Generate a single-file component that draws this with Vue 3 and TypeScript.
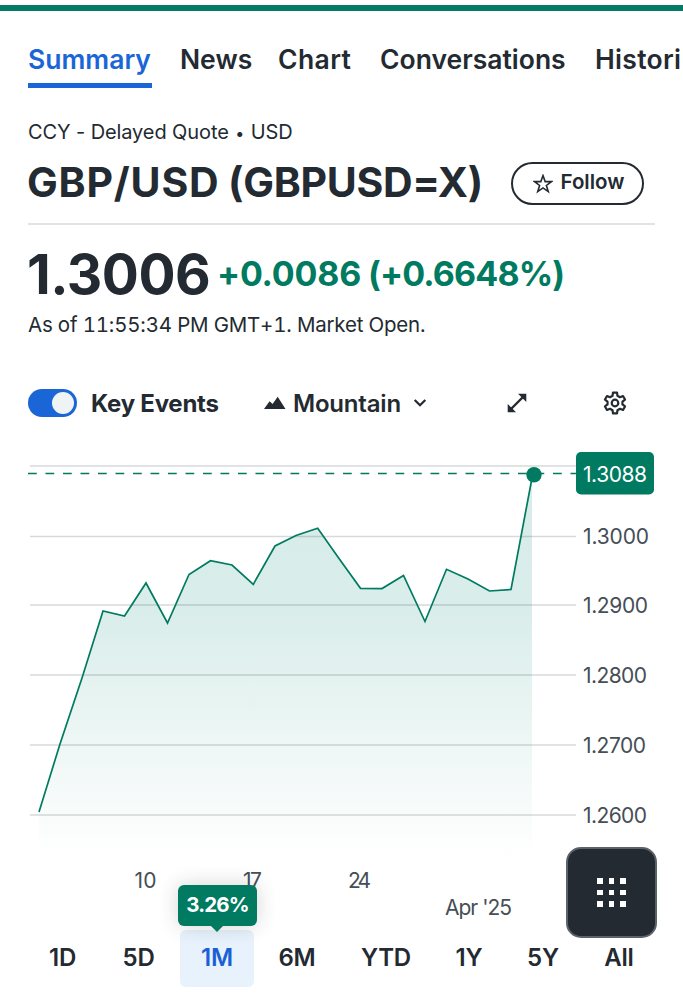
<script setup lang="ts">
interface Tab { label: string; width: number }
interface Point { x: number; y: number }

const tabs: Tab[] = [
  { label: 'Summary', width: 124 },
  { label: 'News', width: 71 },
  { label: 'Chart', width: 73 },
  { label: 'Conversations', width: 187 },
  { label: 'Histori', width: 88 },
]

const ranges = ['1D', '5D', '1M', '6M', 'YTD', '1Y', '5Y', 'All']

const gridLines = [466, 536.5, 605, 675, 745, 815]
const priceLabels = [
  { y: 536.5, text: '1.3000', width: 66 },
  { y: 605, text: '1.2900', width: 65 },
  { y: 675, text: '1.2800', width: 64 },
  { y: 745, text: '1.2700', width: 63 },
  { y: 815, text: '1.2600', width: 64 },
]

const points: Point[] = [
  { x: 39, y: 812 }, { x: 60, y: 744 }, { x: 82, y: 678 }, { x: 103, y: 611 },
  { x: 124.5, y: 616 }, { x: 146, y: 583 }, { x: 167.5, y: 623 }, { x: 189, y: 574.5 },
  { x: 210.5, y: 560.7 }, { x: 232, y: 565 }, { x: 253.3, y: 584.3 }, { x: 275, y: 546 },
  { x: 296, y: 535.5 }, { x: 317.7, y: 528.3 }, { x: 339, y: 558.5 }, { x: 360.5, y: 588.3 },
  { x: 382, y: 588.6 }, { x: 403.5, y: 575.5 }, { x: 425, y: 621.5 }, { x: 446.5, y: 569.3 },
  { x: 468, y: 579 }, { x: 489.5, y: 591 }, { x: 511, y: 589.5 }, { x: 532, y: 478 },
]
const linePath = 'M' + points.map((p) => `${p.x} ${p.y}`).join('L')
const areaPath = `${linePath}V858H39Z`

// Six-toothed cog, one tooth pointing straight up
const polar = (radius: number, deg: number) => {
  const a = ((deg - 90) * Math.PI) / 180
  return `${(12 + radius * Math.cos(a)).toFixed(2)} ${(12 + radius * Math.sin(a)).toFixed(2)}`
}
const gearPath =
  'M' +
  [0, 60, 120, 180, 240, 300]
    .flatMap((d) => [polar(7.6, d - 19), polar(10.6, d - 11), polar(10.6, d + 11), polar(7.6, d + 19)])
    .join('L') +
  'Z'
</script>

<template>
  <main class="page">
    <nav class="tabs">
      <a v-for="(t, i) in tabs" :key="t.label" class="tab" :class="{ active: i === 0 }" :style="{ width: t.width + 'px' }">{{ t.label }}</a>
    </nav>

    <header class="quote">
      <p class="exchange">CCY - Delayed Quote <span class="dot">•</span> USD</p>
      <div class="title-row">
        <h1><span class="pair">GBP/USD</span> <span class="symbol">(GBPUSD=X)</span></h1>
        <button class="follow">
          <svg width="20" height="20" viewBox="0 0 20 20"><path d="M10 1.600l2.150 6h6.250l-5 3.850 1.850 6.150-5.250-3.700-5.250 3.700 1.850-6.150-5-3.850h6.250z" /></svg>
          <span>Follow</span>
        </button>
      </div>
    </header>

    <section class="price">
      <div class="price-row"><span class="last">1.3006</span><span class="change">+0.0086</span><span class="pct">(+0.6648%)</span></div>
      <p class="asof">As of 11:55:34 PM GMT+1. Market Open.</p>
    </section>

    <div class="toolbar">
      <span class="switch"><i></i></span>
      <b class="events">Key Events</b>
      <svg class="mountain" width="22" height="14" viewBox="0 0 22 14"><path d="M0 13L5.6 5.2l3 2.9L13.7.8 21.5 13z" /></svg>
      <span class="kind">Mountain</span>
      <svg class="chevron" width="14" height="10" viewBox="0 0 14 10"><path d="M1.7 2l5.3 5.3L12.3 2" /></svg>
      <svg class="expand" width="20" height="20" viewBox="0 0 20 20"><path class="shaft" d="M3.5 16.5l13-13" /><path d="M11 .7h8.300v8.300zM.7 11v8.300h8.300z" /></svg>
      <svg class="gear" width="24" height="24" viewBox="0 0 24 24"><path :d="gearPath" /><circle cx="12" cy="12" r="3.300" /></svg>
    </div>

    <svg class="chart" width="683" height="500" viewBox="0 430 683 500">
      <defs>
        <linearGradient id="fade" gradientUnits="userSpaceOnUse" x1="0" y1="474" x2="0" y2="858">
          <stop offset="0" stop-color="#008773" stop-opacity="0.155" />
          <stop offset="0.35" stop-color="#008773" stop-opacity="0.15" />
          <stop offset="1" stop-color="#008773" stop-opacity="0" />
        </linearGradient>
      </defs>
      <path :d="areaPath" fill="url(#fade)" />
      <path v-for="y in gridLines" :key="y" class="grid" :d="`M30 ${y}H576`" />
      <path class="last-line" d="M28 473.400H576" />
      <path class="series" :d="linePath" />
      <circle cx="534" cy="474.700" r="7.700" fill="#007a60" />
      <rect x="576" y="452" width="78" height="42.500" rx="5" fill="#007a60" />
      <text class="axis badge" x="583" y="481.500" textLength="64">1.3088</text>
      <text v-for="l in priceLabels" :key="l.text" class="axis" x="583" :y="l.y + 7.700" :textLength="l.width">{{ l.text }}</text>
      <text class="axis" x="134.500" y="888" textLength="22">10</text>
      <text class="axis" x="243" y="888" textLength="19">17</text>
      <text class="axis" x="348" y="888" textLength="23">24</text>
      <text class="axis" x="445" y="914.500" textLength="67">Apr '25</text>
    </svg>

    <div class="ranges">
      <button v-for="r in ranges" :key="r" class="range" :class="{ selected: r === '1M' }">
        {{ r }}
        <span v-if="r === '1M'" class="tip">3.26%</span>
      </button>
    </div>

    <button class="apps" aria-label="Apps"><i v-for="n in 9" :key="n"></i></button>
  </main>
</template>

<style>
body { margin: 0; background: #fff; }
</style>

<style scoped>
.page {
  position: relative;
  width: 683px;
  height: 1000px;
  overflow: hidden;
  box-sizing: border-box;
  border-top: 5px solid #fff;
  font-family: Inter, "Liberation Sans", sans-serif;
  color: #232a31;
  background: #fff;
}
.page::before { content: ""; display: block; height: 6px; background: #037b66; }
button { font: inherit; color: inherit; border: 0; padding: 0; background: none; }
p, h1 { margin: 0; }
.tabs { display: flex; gap: 28px; padding: 31px 0 0 28px; height: 46px; }
.tab { flex: none; height: 41px; line-height: 34px; font-size: 26.500px; font-weight: 570; letter-spacing: 0; white-space: nowrap; border-bottom: 5px solid transparent; }
.tab:nth-child(3) { margin-left: -1px; margin-right: 1px; letter-spacing: .4px; }
.tab:last-child { letter-spacing: .3px; }
.active { color: #1a66d6; border-color: #1a66d6; }
.quote { margin: 0 28px; height: 137px; box-sizing: border-box; border-bottom: 2px solid #e0e4e9; padding-top: 30px; }
.exchange { font-size: 20px; line-height: 28px; letter-spacing: -.1px; white-space: nowrap; }
.dot { font-size: 16px; margin: 0 1px; }
.title-row { display: flex; align-items: center; gap: 29px; height: 50px; margin-top: 10px; }
h1 { display: flex; gap: 11px; width: 454px; font-size: 41px; line-height: 50px; font-weight: 700; white-space: nowrap; }
.pair { width: 190px; letter-spacing: .8px; text-indent: -1px; }
.symbol { letter-spacing: -.3px; text-indent: -1px; }
.follow { display: flex; align-items: center; justify-content: center; gap: 8px; box-sizing: border-box; width: 133px; height: 43px; margin-top: 3px; padding-left: 2px; border: 2px solid #232a31; border-radius: 22px; font-size: 20.500px; line-height: 24px; font-weight: 570; }
.follow span { margin-top: -3px; }
.follow svg { fill: none; stroke: #232a31; stroke-width: 1.600; }
.price { padding-left: 28px; height: 158px; box-sizing: border-box; padding-top: 15px; }
.price-row { display: flex; align-items: center; height: 68px; font-weight: 700; white-space: nowrap; }
.last { width: 190px; font-size: 55px; letter-spacing: -.5px; text-indent: -1px; }
.change { width: 150px; margin-top: -2px; font-size: 34px; letter-spacing: -.2px; color: #007a60; text-indent: -1px; }
.pct { margin-top: -2px; font-size: 34px; letter-spacing: -.85px; color: #007a60; }
.asof { font-size: 20.500px; line-height: 28px; margin-top: 3px; letter-spacing: -.2px; font-variant-numeric: tabular-nums; white-space: nowrap; }
.toolbar { display: flex; align-items: center; height: 40px; padding-left: 28px; font-size: 24px; white-space: nowrap; }
.toolbar svg { flex: none; fill: #232a31; }
.switch { flex: none; display: flex; justify-content: flex-end; box-sizing: border-box; width: 49px; height: 28px; padding: 3px; border-radius: 14px; background: #1a66d6; }
.switch i { width: 22px; height: 22px; border-radius: 50%; background: #f0f3f5; }
.events { width: 128px; margin: 0 45px 0 14px; font-weight: 700; letter-spacing: -.25px; }
.kind { width: 108px; margin-left: 7px; font-weight: 570; letter-spacing: -.2px; }
.chevron { margin-left: 12px; }
.toolbar .chevron path { fill: none; stroke: #232a31; stroke-width: 2.200; }
.expand { margin-left: 80px; }
.shaft { stroke: #232a31; stroke-width: 2.400; }
.gear { margin-left: 76px; }
.toolbar .gear { fill: none; stroke: #232a31; stroke-width: 2.200; stroke-linejoin: round; }
.chart { display: block; margin-top: 7px; }
.grid { stroke: #232a31; stroke-opacity: .18; stroke-width: 1.500; }
.last-line { stroke: #007a60; stroke-width: 1.500; stroke-dasharray: 8.750 8.750; }
.series { fill: none; stroke: #007a60; stroke-width: 1.700; }
.axis { font-size: 21px; fill: #464e56; }
.badge { fill: #fff; }
.ranges { display: grid; grid-template-columns: 77px 75px 82px 78px 100px 66px 82px 70px; justify-items: center; padding-left: 24px; height: 57px; }
.range { position: relative; width: 66px; height: 57px; padding-bottom: 2px; box-sizing: border-box; font-size: 24px; font-weight: 570; letter-spacing: -.2px; text-align: center; border-radius: 6px; }
.selected { width: 74px; background: #e7f2fc; color: #1a5fd6; }
.tip { position: absolute; left: -2px; top: -45px; width: 79px; height: 41px; border-radius: 6px; background: #007a60; color: #fff; font-size: 20.500px; line-height: 39px; font-weight: 700; letter-spacing: -.8px; box-shadow: 0 0 20px rgba(35, 42, 49, .2); }
.tip::after { content: ""; position: absolute; left: 32px; top: 40px; border: 7px solid transparent; border-top-color: #007a60; border-bottom: 0; }
.apps { position: absolute; left: 566px; top: 842px; box-sizing: border-box; width: 91px; height: 91px; display: grid; grid-template-columns: repeat(3, 5.500px); grid-auto-rows: 5.500px; gap: 6px; place-content: center; border: 2px solid #5b636a; border-radius: 15px; background: #232a31; }
.apps i { background: #fff; }
</style>
